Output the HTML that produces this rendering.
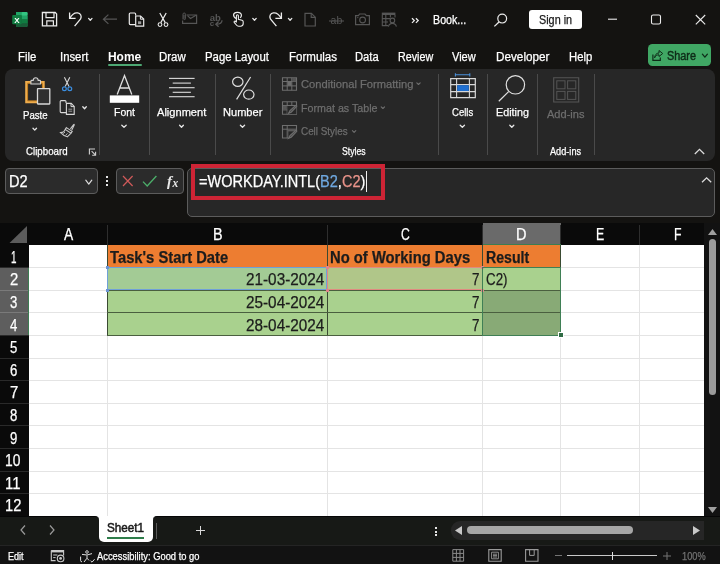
<!DOCTYPE html>
<html lang="en"><head><meta charset="utf-8"><title>Excel - WORKDAY.INTL</title>
<style>

html,body{margin:0;padding:0}
body{width:720px;height:564px;overflow:hidden;background:#141311;position:relative;font-family:"Liberation Sans", sans-serif;}
.a{position:absolute}
.t{position:absolute;white-space:nowrap;transform-origin:0 50%;-webkit-text-stroke:0.25px currentColor;}
svg{position:absolute;overflow:visible}
.sep{position:absolute;width:1px;background:#4a4a4a;top:74px;height:81px}
.box{position:absolute;box-sizing:border-box;border:1px solid #5c5c5c;border-radius:4px;background:#2b2b2b}
.hl{position:absolute;height:1px;background:#e4e4e4;left:28.8px;width:675.2px}
.vl{position:absolute;width:1px;background:#e4e4e4;top:245px;height:271px}
</style></head>
<body>
<div class="a" style="left:5px;top:69.2px;width:710px;height:91.8px;background:#272727;border-radius:8px;"></div>
<div class="sep" style="left:99.1px"></div>
<div class="sep" style="left:148.9px"></div>
<div class="sep" style="left:214.9px"></div>
<div class="sep" style="left:270.1px"></div>
<div class="sep" style="left:437.7px"></div>
<div class="sep" style="left:486.8px"></div>
<div class="sep" style="left:537.2px"></div>
<div class="sep" style="left:594.1px"></div>
<div class="a" style="left:108.2px;top:64.3px;width:34px;height:2.1px;background:#4da873;border-radius:1px;"></div>
<div class="a" style="left:528.5px;top:10.2px;width:53px;height:19.2px;background:#ffffff;border-radius:3px;"></div>
<div class="a" style="left:647.7px;top:44.2px;width:63.7px;height:21.8px;background:#40a764;border-radius:4.5px;"></div>
<div class="box" style="left:5px;top:168px;width:93px;height:26px"></div>
<div class="box" style="left:116px;top:168px;width:68px;height:26px"></div>
<div class="box" style="left:187px;top:168px;width:527.5px;height:49px;border-radius:5px;background:#272727"></div>
<div class="a" style="left:190.5px;top:164px;width:194px;height:36px;box-sizing:border-box;border:4px solid #cd2435"></div>
<div class="a" style="left:366.3px;top:171px;width:1px;height:20.5px;background:#f0f0f0;"></div>
<div class="a" style="left:106.4px;top:176.4px;width:2px;height:2px;background:#e6e6e6;"></div>
<div class="a" style="left:106.4px;top:180.1px;width:2px;height:2px;background:#e6e6e6;"></div>
<div class="a" style="left:106.4px;top:183.8px;width:2px;height:2px;background:#e6e6e6;"></div>
<div class="a" style="left:0px;top:223px;width:720px;height:22px;background:#0a0a0a;"></div>
<div class="a" style="left:0px;top:245px;width:28.8px;height:271.2px;background:#0a0a0a;"></div>
<div class="a" style="left:28.8px;top:245px;width:675.2px;height:271.2px;background:#ffffff;"></div>
<div class="a" style="left:704px;top:223px;width:16px;height:293.2px;background:#121212;"></div>
<div class="a" style="left:482.5px;top:223px;width:78px;height:22px;background:#6a6a6a;"></div>
<div class="a" style="left:0px;top:267.6px;width:28.8px;height:67.80000000000001px;background:#5e5e5e;"></div>
<div class="a" style="left:106.5px;top:225px;width:1px;height:20px;background:#2e2e2e;"></div>
<div class="a" style="left:326.5px;top:225px;width:1px;height:20px;background:#2e2e2e;"></div>
<div class="a" style="left:482.0px;top:225px;width:1px;height:20px;background:#2e2e2e;"></div>
<div class="a" style="left:560.0px;top:225px;width:1px;height:20px;background:#2e2e2e;"></div>
<div class="a" style="left:638.5px;top:225px;width:1px;height:20px;background:#2e2e2e;"></div>
<div class="a" style="left:0px;top:267.1px;width:28.8px;height:1px;background:#2a2a2a;"></div>
<div class="a" style="left:0px;top:289.7px;width:28.8px;height:1px;background:#7a7a7a;"></div>
<div class="a" style="left:0px;top:312.3px;width:28.8px;height:1px;background:#7a7a7a;"></div>
<div class="a" style="left:0px;top:334.9px;width:28.8px;height:1px;background:#2a2a2a;"></div>
<div class="a" style="left:0px;top:357.5px;width:28.8px;height:1px;background:#2a2a2a;"></div>
<div class="a" style="left:0px;top:380.1px;width:28.8px;height:1px;background:#2a2a2a;"></div>
<div class="a" style="left:0px;top:402.70000000000005px;width:28.8px;height:1px;background:#2a2a2a;"></div>
<div class="a" style="left:0px;top:425.3px;width:28.8px;height:1px;background:#2a2a2a;"></div>
<div class="a" style="left:0px;top:447.9px;width:28.8px;height:1px;background:#2a2a2a;"></div>
<div class="a" style="left:0px;top:470.5px;width:28.8px;height:1px;background:#2a2a2a;"></div>
<div class="a" style="left:0px;top:493.1px;width:28.8px;height:1px;background:#2a2a2a;"></div>
<div class="a" style="left:28.2px;top:267.6px;width:1px;height:67.80000000000001px;background:#3d7d52;"></div>
<div class="a" style="left:482.5px;top:244px;width:78px;height:1px;background:#3d7d52;"></div>
<svg style="left:9px;top:225px;" width="19" height="19" viewBox="0 0 19 19" fill="none"><path d="M18 1V18H0.5Z" fill="#5c5c5c"/></svg>
<div class="hl" style="top:267.1px"></div>
<div class="hl" style="top:289.7px"></div>
<div class="hl" style="top:312.3px"></div>
<div class="hl" style="top:334.9px"></div>
<div class="hl" style="top:357.5px"></div>
<div class="hl" style="top:380.1px"></div>
<div class="hl" style="top:402.7px"></div>
<div class="hl" style="top:425.3px"></div>
<div class="hl" style="top:447.9px"></div>
<div class="hl" style="top:470.5px"></div>
<div class="hl" style="top:493.1px"></div>
<div class="vl" style="left:106.5px"></div>
<div class="vl" style="left:326.5px"></div>
<div class="vl" style="left:482.0px"></div>
<div class="vl" style="left:560.0px"></div>
<div class="vl" style="left:638.5px"></div>
<div class="a" style="left:107px;top:245.0px;width:453.5px;height:22.6px;background:#ed7d31;"></div>
<div class="a" style="left:107px;top:267.6px;width:453.5px;height:67.80000000000001px;background:#a9d18e;"></div>
<div class="a" style="left:482.5px;top:290.2px;width:78px;height:45.2px;background:#88aa76;"></div>
<div class="a" style="left:106.5px;top:245.0px;width:1px;height:90.4px;background:#3a4a32;"></div>
<div class="a" style="left:326.5px;top:245.0px;width:1px;height:90.4px;background:#3a4a32;"></div>
<div class="a" style="left:482.0px;top:245.0px;width:1px;height:90.4px;background:#3a4a32;"></div>
<div class="a" style="left:560.0px;top:245.0px;width:1px;height:90.4px;background:#3a4a32;"></div>
<div class="a" style="left:107px;top:289.7px;width:453.5px;height:1px;background:#4a5f3f;"></div>
<div class="a" style="left:107px;top:312.3px;width:453.5px;height:1px;background:#4a5f3f;"></div>
<div class="a" style="left:107px;top:334.9px;width:453.5px;height:1px;background:#4a5f3f;"></div>
<div class="a" style="left:107px;top:267.1px;width:453.5px;height:1px;background:#c9c0a0;"></div>
<div class="a" style="left:107px;top:267.1px;width:220px;height:22.6px;box-sizing:border-box;border:1px solid #6fa0d8;background:rgba(120,160,220,0.10)"></div>
<div class="a" style="left:327px;top:267.1px;width:155.5px;height:22.6px;box-sizing:border-box;border:1px solid #e08a80;background:rgba(230,120,110,0.12)"></div>
<div class="a" style="left:105.5px;top:266.1px;width:3px;height:3px;background:#6b94d4;"></div>
<div class="a" style="left:105.5px;top:288.7px;width:3px;height:3px;background:#6b94d4;"></div>
<div class="a" style="left:325.5px;top:266.1px;width:3px;height:3px;background:#e0848a;"></div>
<div class="a" style="left:325.5px;top:288.7px;width:3px;height:3px;background:#e0848a;"></div>
<div class="a" style="left:481.0px;top:266.1px;width:3px;height:3px;background:#e0848a;"></div>
<div class="a" style="left:481.0px;top:288.7px;width:3px;height:3px;background:#e0848a;"></div>
<div class="a" style="left:482px;top:267.1px;width:79px;height:68.80000000000001px;box-sizing:border-box;border:1px solid #3f7f55"></div>
<div class="a" style="left:558.5px;top:333.4px;width:4px;height:4px;background:#2f6b45;outline:0.7px solid #fff;"></div>
<div class="a" style="left:709px;top:239px;width:7px;height:156px;background:#9b9b9b;border-radius:4px;"></div>
<svg style="left:708px;top:229px;" width="9" height="6" viewBox="0 0 9 6" fill="none"><path d="M4.5 0L9 6H0Z" fill="#a0a0a0"/></svg>
<svg style="left:708px;top:507px;" width="9" height="6" viewBox="0 0 9 6" fill="none"><path d="M0 0H9L4.5 6Z" fill="#a0a0a0"/></svg>
<div class="a" style="left:0px;top:516.2px;width:720px;height:29px;background:#171916;"></div>
<div class="a" style="left:0px;top:516.2px;width:720px;height:1.2px;background:#060606;"></div>
<div class="a" style="left:95px;top:516.2px;width:62px;height:4px;background:#ffffff;"></div>
<div class="a" style="left:89px;top:516.2px;width:10px;height:8px;background:#171916;border-radius:0 4px 0 0;border-top:1.2px solid #060606;box-sizing:border-box;"></div>
<div class="a" style="left:153px;top:516.2px;width:10px;height:8px;background:#171916;border-radius:4px 0 0 0;border-top:1.2px solid #060606;box-sizing:border-box;"></div>
<div class="a" style="left:99px;top:516.2px;width:54px;height:26px;background:#ffffff;border-radius:0 0 5px 5px;"></div>
<div class="a" style="left:107px;top:536.8px;width:37px;height:2px;background:#2e7d4a;"></div>
<div class="a" style="left:155.5px;top:523px;width:1px;height:16px;background:#5a5a5a;"></div>
<div class="a" style="left:451px;top:521px;width:253px;height:19px;background:#262626;border-radius:9px 0 0 9px;"></div>
<div class="a" style="left:467px;top:526px;width:166px;height:8px;background:#a6a6a6;border-radius:4px;"></div>
<svg style="left:455px;top:525.5px;" width="7" height="9" viewBox="0 0 7 9" fill="none"><path d="M7 0V9L0 4.5Z" fill="#c8c8c8"/></svg>
<svg style="left:693px;top:525.5px;" width="7" height="9" viewBox="0 0 7 9" fill="none"><path d="M0 0V9L7 4.5Z" fill="#c8c8c8"/></svg>
<div class="a" style="left:435px;top:527px;width:2px;height:2px;background:#e6e6e6;"></div>
<div class="a" style="left:435px;top:530.5px;width:2px;height:2px;background:#e6e6e6;"></div>
<div class="a" style="left:435px;top:534px;width:2px;height:2px;background:#e6e6e6;"></div>
<svg style="left:20px;top:525px;" width="6" height="10" viewBox="0 0 6 10" fill="none"><path d="M5 0.5L1 5L5 9.5" stroke="#9a9a9a" stroke-width="1.2"/></svg>
<svg style="left:49px;top:525px;" width="6" height="10" viewBox="0 0 6 10" fill="none"><path d="M1 0.5L5 5L1 9.5" stroke="#9a9a9a" stroke-width="1.2"/></svg>
<svg style="left:195.5px;top:525.5px;" width="9" height="9" viewBox="0 0 9 9" fill="none"><path d="M4.5 0V9M0 4.5H9" stroke="#d8d8d8" stroke-width="1"/></svg>
<div class="a" style="left:0px;top:545.2px;width:720px;height:18.8px;background:#121212;"></div>
<div class="a" style="left:0px;top:545px;width:720px;height:1px;background:#242424;"></div>
<div class="a" style="left:567px;top:555.2px;width:90px;height:1.2px;background:#c8c8c8;"></div>
<div class="a" style="left:611.8px;top:552px;width:1.4px;height:7.5px;background:#e0e0e0;"></div>
<div class="a" style="left:555px;top:555.2px;width:7px;height:1.1px;background:#747474;"></div>
<svg style="left:662.5px;top:552px;" width="8" height="8" viewBox="0 0 8 8" fill="none"><path d="M4 0V8M0 4H8" stroke="#747474" stroke-width="1"/></svg>
<svg style="left:0;top:0;will-change:transform" width="720" height="564" viewBox="0 0 720 564" fill="none">
<rect x="16" y="12" width="11.5" height="15" rx="1.2" fill="#1f9a5b"/>
<rect x="16" y="12" width="5.8" height="3.8" fill="#21a366"/>
<rect x="21.7" y="12" width="5.8" height="3.8" rx="1" fill="#33c481"/>
<rect x="16" y="15.8" width="5.8" height="3.7" fill="#107c41"/>
<rect x="21.7" y="15.8" width="5.8" height="3.7" fill="#21a366"/>
<rect x="16" y="19.5" width="11.5" height="7.5" rx="1.2" fill="#185c37"/>
<rect x="21.7" y="19.5" width="5.8" height="3.7" fill="#107c41"/>
<rect x="12.2" y="15" width="9.6" height="9.2" rx="1" fill="#107c41"/>
<text x="17" y="22.6" font-family="Liberation Sans, sans-serif" font-size="8" font-weight="700" fill="#fff" text-anchor="middle">X</text>
<path d="M42.4 12.5H55.2L56.6 13.9V25.8H42.4Z" stroke="#ececec" stroke-width="1.3" fill="none" />
<path d="M46 12.5V17.6H54V12.5" stroke="#ececec" stroke-width="1.2" fill="none" />
<path d="M46.8 25.8V20.9H53.4V25.8" stroke="#ececec" stroke-width="1.2" fill="none" />
<path d="M69.6 12.6V18.4H75.6" stroke="#ececec" stroke-width="1.3" fill="none" />
<path d="M69.9 18.1C72 14.3 75.2 12.6 77.6 12.9C80.6 13.3 82 16.2 80.6 19L74.6 26.2" stroke="#ececec" stroke-width="1.3" fill="none" />
<path d="M88.6 18.4L90.3 20.3L92.0 18.4" stroke="#e6e6e6" stroke-width="1.3" fill="none" stroke-linecap="round" stroke-linejoin="round"/>
<path d="M103.4 19.2H117M108.4 14.6L103.4 19.2L108.4 23.9" stroke="#565656" stroke-width="1.2" fill="none" />
<path d="M135.6 24.6H130.3Q129.3 24.6 129.3 23.6V14Q129.3 13 130.3 13H134.6Q135.6 13 135.6 14V15.5" stroke="#ececec" stroke-width="1.2" fill="none" />
<path d="M135.7 16H140.6L143.7 19V26.2H135.7Z" stroke="#ececec" stroke-width="1.2" fill="none" />
<path d="M140.4 16V19.2H143.7" stroke="#ececec" stroke-width="1" fill="none" />
<rect x="138" y="21.3" width="3.2" height="2.8" fill="#9a9a9a"/>
<path d="M159.8 13L165.2 22.6M166.2 13L160.8 22.6" stroke="#ececec" stroke-width="1.2" fill="none" />
<circle cx="160" cy="24.6" r="1.9" stroke="#ececec" stroke-width="1.1"/>
<circle cx="166" cy="24.6" r="1.9" stroke="#ececec" stroke-width="1.1"/>
<path d="M186.5 15H196.6V23.4H182.6V20.5" stroke="#565656" stroke-width="1.2" fill="none" />
<path d="M187.5 15.6L190.5 18.5L196 15.2" stroke="#565656" stroke-width="1.1" fill="none" />
<path d="M183 19.5V14.2Q183 13 184.2 13Q185.4 13 185.4 14.2V18.8Q185.4 19.6 184.6 19.6Q184 19.6 184 18.8V14.8" stroke="#565656" stroke-width="1" fill="none" />
<text x="209.8" y="20.6" font-family="Liberation Sans, sans-serif" font-size="9.5" font-weight="700" fill="#565656">ab</text>
<text x="209.8" y="26" font-family="Liberation Sans, sans-serif" font-size="8" font-weight="700" fill="#565656">c</text>
<path d="M222 20.2C222 23 220.4 24.2 216.2 24.2M218.6 21.6L215.8 24.2L218.6 26.8" stroke="#565656" stroke-width="1.3" fill="none" />
<path d="M236.2 18.6C234.4 17.6 233.4 16.2 233.6 14.6C233.9 12.9 235.6 12.2 237.6 12.3C240 12.4 241.6 13.6 241.4 15.6C241.3 16.6 240.8 17.2 240.2 17.8" stroke="#ececec" stroke-width="1.2" fill="none" />
<path d="M236.4 22.6V15.8Q236.4 14.8 237.4 14.8Q238.4 14.8 238.4 15.8V19.4L242 20.2Q243.2 20.6 243.2 21.8V23.6Q243.2 26.2 240.6 26.2H238.6Q237.2 26.2 236.4 25L234.2 22.4Q233.8 21.6 234.6 21.2Q235.4 21 236.4 22.2" stroke="#ececec" stroke-width="1.1" fill="none" />
<path d="M252.8 18.4L254.5 20.3L256.2 18.4" stroke="#e6e6e6" stroke-width="1.3" fill="none" stroke-linecap="round" stroke-linejoin="round"/>
<path d="M281.4 12.6V18.4H275.4" stroke="#ececec" stroke-width="1.3" fill="none" />
<path d="M281.1 18.1C279 14.3 275.8 12.6 273.4 12.9C270.4 13.3 269 16.2 270.4 19L276.4 26.2" stroke="#ececec" stroke-width="1.3" fill="none" />
<path d="M288.40000000000003 18.4L290.1 20.3L291.8 18.4" stroke="#e6e6e6" stroke-width="1.3" fill="none" stroke-linecap="round" stroke-linejoin="round"/>
<path d="M305 13.3H311.4L315.3 17.2V26H305Z" stroke="#565656" stroke-width="1.2" fill="none" />
<path d="M311.2 13.5V17.4H315.2" stroke="#565656" stroke-width="1.1" fill="none" />
<text x="330.6" y="24.4" font-family="Liberation Sans, sans-serif" font-size="10.5" fill="#565656">ab</text>
<path d="M329 21H344" stroke="#565656" stroke-width="1" fill="none" />
<path d="M355.6 15.6H358.4L359.6 14H365L366.4 15.6H369.4V24.6H355.6Z" stroke="#565656" stroke-width="1.2" fill="none" />
<circle cx="362.6" cy="20" r="2.9" stroke="#565656" stroke-width="1.1"/>
<circle cx="357.8" cy="17.6" r="0.7" fill="#565656"/>
<rect x="381.8" y="12.6" width="13.6" height="2.4" fill="#565656"/>
<path d="M382.3 15V25.6H388M385.8 15V25.6M382.3 18.6H390M382.3 22H388M390.4 15V17.6M395 15V17.6" stroke="#565656" stroke-width="1.1" fill="none" />
<circle cx="392.4" cy="20.4" r="2.3" stroke="#565656" stroke-width="1.1"/>
<path d="M388.4 26.6C389 24.2 390.4 23.4 392.4 23.4C394.4 23.4 395.8 24.2 396.4 26.6" stroke="#565656" stroke-width="1.1" fill="none" />
<path d="M412 18.3L414.3 20.6L412 22.9M415.9 18.3L418.2 20.6L415.9 22.9" stroke="#ececec" stroke-width="1.3" fill="none" />
<circle cx="502.2" cy="18.6" r="4.4" stroke="#ececec" stroke-width="1.2"/>
<path d="M499 22L494.4 26.4" stroke="#ececec" stroke-width="1.3" fill="none" />
<path d="M608 19.2H617" stroke="#ececec" stroke-width="1.1" fill="none" />
<rect x="651.5" y="15" width="9" height="9" rx="1.6" stroke="#ececec" stroke-width="1.1"/>
<path d="M695.8 15L705.2 24.4M705.2 15L695.8 24.4" stroke="#ececec" stroke-width="1.1" fill="none" />
<path d="M652.9 54.6V60.3H660.3V57.6" stroke="#0e2c18" stroke-width="1.2" fill="none" />
<path d="M654.6 57.8C654.9 54.8 656.4 53.1 659 53V50.5L662.7 53.5L659 56.5V54.8C657 54.8 655.6 55.8 654.6 57.8Z" stroke="#0e2c18" stroke-width="1" fill="none" />
<path d="M702.4 54.199999999999996L704.9000000000001 57.1L707.4000000000001 54.199999999999996" stroke="#0e2c18" stroke-width="1.3" fill="none" stroke-linecap="round" stroke-linejoin="round"/>
<path d="M31 82.2H26.5V102H37" stroke="#eeac4c" stroke-width="2.6" fill="none" stroke-linejoin="miter"/>
<path d="M40.4 82.2H43.4V88" stroke="#eeac4c" stroke-width="2.6" fill="none" stroke-linejoin="miter"/>
<path d="M31 83.2H27.6V100.9H37" stroke="#c07a1c" stroke-width="0.9" fill="none" />
<path d="M40.4 83.2H42.4V88" stroke="#c07a1c" stroke-width="0.9" fill="none" />
<path d="M30.9 84V81.2Q30.9 80.4 31.7 80.4H33.2Q33.4 77.7 35.7 77.7Q38 77.7 38.2 80.4H39.7Q40.5 80.4 40.5 81.2V84Z" stroke="#d2d2d2" stroke-width="1.1" fill="#3a3a3a" />
<rect x="37.5" y="88.6" width="12.3" height="15.4" rx="0.4" stroke="#d8d8d8" stroke-width="1.3" fill="#2f2f2f"/>
<path d="M33.0 128.2L34.75 130.1L36.5 128.2" stroke="#e6e6e6" stroke-width="1.3" fill="none" stroke-linecap="round" stroke-linejoin="round"/>
<path d="M64.4 77.2L69 86.6M69.8 77.2L65.2 86.6" stroke="#d8d8d8" stroke-width="1.1" fill="none" />
<circle cx="64.4" cy="88.8" r="1.9" stroke="#3b8ee0" stroke-width="1.2"/>
<circle cx="69.8" cy="88.8" r="1.9" stroke="#3b8ee0" stroke-width="1.2"/>
<path d="M66 112.6H61.2Q60.2 112.6 60.2 111.6V101.6Q60.2 100.6 61.2 100.6H65Q66 100.6 66 101.6V103" stroke="#d8d8d8" stroke-width="1.1" fill="none" />
<path d="M66.4 103.4H71.2L74.2 106.4V114.4H66.4Z" stroke="#d8d8d8" stroke-width="1.1" fill="none" />
<path d="M71 103.4V106.6H74.2" stroke="#d8d8d8" stroke-width="1" fill="none" />
<path d="M68.4 109.2H72.2M68.4 111.2H72.2" stroke="#9a9a9a" stroke-width="1" fill="none" />
<path d="M82.8 106.80000000000001L84.55 108.7L86.3 106.80000000000001" stroke="#e6e6e6" stroke-width="1.3" fill="none" stroke-linecap="round" stroke-linejoin="round"/>
<path d="M70.4 128.8L73.6 124.6Q74.4 124 74.2 125.2L71.8 130" stroke="#c8c8c8" stroke-width="1.1" fill="none" />
<path d="M66.4 127.6L72.2 131.4L71 133.2L65.2 129.4Z" stroke="#c8c8c8" stroke-width="1.1" fill="none" />
<path d="M65.2 129.6C64.4 131.6 62.6 132.6 60.6 132.6C62.4 134.6 64.8 136.2 67.4 136.8C68.6 135.6 70 134.4 70.8 133.2" stroke="#c8c8c8" stroke-width="1.1" fill="none" />
<path d="M63.4 133.6L65 132M65.6 135.4L67.4 133.4" stroke="#c8c8c8" stroke-width="0.9" fill="none" />
<path d="M89.4 154.6V149H95M91.6 151.2L95.6 155.2M95.6 151.8V155.2H92.2" stroke="#d0d0d0" stroke-width="1.1" fill="none" />
<path d="M117.2 94.6L124.5 75.6L131.8 94.6M119.8 88H129.2" stroke="#e0e0e0" stroke-width="1.3" fill="none" />
<rect x="109.8" y="95.4" width="29.4" height="7.4" fill="#ffffff"/>
<path d="M121.8 125.30000000000001L124.0 127.3L126.2 125.30000000000001" stroke="#e6e6e6" stroke-width="1.3" fill="none" stroke-linecap="round" stroke-linejoin="round"/>
<path d="M169 78.4H194.6" stroke="#dcdcdc" stroke-width="1.1" fill="none" />
<path d="M172.7 83.1H190.9" stroke="#dcdcdc" stroke-width="1.1" fill="none" />
<path d="M169 87.7H194.6" stroke="#dcdcdc" stroke-width="1.1" fill="none" />
<path d="M172.7 92.3H190.9" stroke="#dcdcdc" stroke-width="1.1" fill="none" />
<path d="M169 96.7H194.6" stroke="#dcdcdc" stroke-width="1.1" fill="none" />
<path d="M179.60000000000002 125.30000000000001L181.5 127.3L183.39999999999998 125.30000000000001" stroke="#e6e6e6" stroke-width="1.3" fill="none" stroke-linecap="round" stroke-linejoin="round"/>
<ellipse cx="237.8" cy="81.8" rx="5.2" ry="4.6" stroke="#e0e0e0" stroke-width="1.2"/>
<ellipse cx="248.8" cy="94.6" rx="5.2" ry="4.6" stroke="#e0e0e0" stroke-width="1.2"/>
<path d="M250.6 77L236.6 99.4" stroke="#e0e0e0" stroke-width="1.2" fill="none" />
<path d="M240.4 125.30000000000001L242.5 127.3L244.6 125.30000000000001" stroke="#e6e6e6" stroke-width="1.3" fill="none" stroke-linecap="round" stroke-linejoin="round"/>
<path d="M282.5 77.8H296.5V90.3H282.5Z" stroke="#6e6e6e" stroke-width="1.1" fill="none" />
<path d="M282.5 81.5H296.5M282.5 85.89999999999999H296.5M287.2 77.8V90.3M291.8 77.8V90.3" stroke="#6e6e6e" stroke-width="1" fill="none" />
<rect x="287.6" y="81.8" width="3.8" height="4" fill="#6e6e6e"/>
<rect x="292.2" y="77.8" width="3.8" height="3.8" fill="#555"/>
<path d="M282.5 101.8H296.5V114.3H282.5Z" stroke="#6e6e6e" stroke-width="1.1" fill="none" />
<path d="M282.5 105.5H296.5M282.5 109.89999999999999H296.5M287.2 101.8V114.3M291.8 101.8V114.3" stroke="#6e6e6e" stroke-width="1" fill="none" />
<rect x="287.4" y="106" width="9" height="8" fill="#272727"/>
<path d="M288.4 113.4L290 110.6L295.6 105.4Q296.8 105 296.8 106.4L291.2 112.2Z" stroke="#6e6e6e" stroke-width="1.1" fill="#4a4a4a" />
<rect x="283" y="105.8" width="3.8" height="3.8" fill="#565656"/>
<path d="M282.5 125.5H296.5V138H282.5Z" stroke="#6e6e6e" stroke-width="1.1" fill="none" />
<path d="M282.5 129.2H296.5M287.2 125.5V138" stroke="#6e6e6e" stroke-width="1" fill="none" />
<rect x="287.8" y="129.8" width="8" height="7.6" fill="#5a5a5a"/>
<rect x="288.4" y="131.4" width="9" height="7.6" fill="#272727"/>
<path d="M288.4 138.4L290 135.6L295.6 130.4Q296.8 130 296.8 131.4L291.2 137.2Z" stroke="#6e6e6e" stroke-width="1.1" fill="#4a4a4a" />
<path d="M416.8 82.80000000000001L418.5 84.5L420.2 82.80000000000001" stroke="#6e6e6e" stroke-width="1.1" fill="none" stroke-linecap="round" stroke-linejoin="round"/>
<path d="M381.2 106.80000000000001L382.9 108.5L384.59999999999997 106.80000000000001" stroke="#6e6e6e" stroke-width="1.1" fill="none" stroke-linecap="round" stroke-linejoin="round"/>
<path d="M352.40000000000003 130.6L354.1 132.3L355.8 130.6" stroke="#6e6e6e" stroke-width="1.1" fill="none" stroke-linecap="round" stroke-linejoin="round"/>
<path d="M455.4 73.2V76.4M469.8 73.2V76.4M455.4 74.8H469.8" stroke="#4a90d9" stroke-width="1.1" fill="none" />
<path d="M450.7 78.6H475.3V97.6H450.7Z" stroke="#d8d8d8" stroke-width="1.2" fill="none" />
<path d="M450.7 84.6H475.3M450.7 91.6H475.3M456.6 78.6V97.6M469.4 78.6V97.6" stroke="#d8d8d8" stroke-width="1.1" fill="none" />
<rect x="457.2" y="85.2" width="11.6" height="5.8" fill="#1f6fd0"/>
<path d="M460.2 125.30000000000001L462.35 127.3L464.5 125.30000000000001" stroke="#e6e6e6" stroke-width="1.3" fill="none" stroke-linecap="round" stroke-linejoin="round"/>
<circle cx="515.4" cy="84.8" r="9.2" stroke="#e0e0e0" stroke-width="1.2"/>
<path d="M508.6 91.6L498.8 101.2" stroke="#e0e0e0" stroke-width="1.2" fill="none" />
<path d="M509.8 125.30000000000001L511.8 127.3L513.8000000000001 125.30000000000001" stroke="#e6e6e6" stroke-width="1.3" fill="none" stroke-linecap="round" stroke-linejoin="round"/>
<path d="M553.7 77.8H578.7V102H553.7Z" stroke="#565656" stroke-width="1.1" fill="none" />
<rect x="556.8" y="80.8" width="8.2" height="8" stroke="#565656" stroke-width="1"/>
<rect x="556.8" y="91.4" width="8.2" height="8" stroke="#565656" stroke-width="1"/>
<rect x="567.6" y="80.8" width="8.2" height="8" stroke="#565656" stroke-width="1"/>
<rect x="567.6" y="91.4" width="8.2" height="8" stroke="#565656" stroke-width="1"/>
<path d="M694.8 154L699.5 149.4L704.2 154" stroke="#dcdcdc" stroke-width="1.3" fill="none" />
<path d="M85.8 180.20000000000002L88.8 184.1L91.8 180.20000000000002" stroke="#dcdcdc" stroke-width="1.2" fill="none" stroke-linecap="round" stroke-linejoin="round"/>
<path d="M123 176L132.6 186M132.6 176L123 186" stroke="#d05a5a" stroke-width="1.2" fill="none" />
<path d="M143 181.6L147.2 186L156.4 176" stroke="#4cae6a" stroke-width="1.3" fill="none" />
<text x="167" y="186" font-family="Liberation Serif, serif" font-style="italic" font-weight="700" font-size="15" fill="#e8e8e8">f</text>
<text x="172.4" y="186.6" font-family="Liberation Serif, serif" font-style="italic" font-weight="700" font-size="11.5" fill="#e8e8e8">x</text>
<path d="M702 182.2L706.6 177.8L711.2 182.2" stroke="#dcdcdc" stroke-width="1.3" fill="none" />
<path d="M51.3 550.6H63.6V555.6M51.3 550.6V560.6H55.6" stroke="#c8c8c8" stroke-width="1.1" fill="none" />
<rect x="51.3" y="550.4" width="12.3" height="2" fill="#c8c8c8"/>
<path d="M53.2 555H57.4M53.2 557.6H55.6" stroke="#c8c8c8" stroke-width="1" fill="none" />
<circle cx="60.6" cy="558.4" r="3.3" stroke="#c8c8c8" stroke-width="1.1"/>
<circle cx="60.6" cy="558.4" r="1.4" fill="#c8c8c8"/>
<circle cx="87" cy="552" r="1.3" stroke="#e0e0e0" stroke-width="0.9"/>
<path d="M82 554.4Q87 556 92 553.6M87 555.4V558.2M87 558.2L84 562M87 558.2L89 560.4" stroke="#e0e0e0" stroke-width="1" fill="none" />
<path d="M80.6 556.6V560.6Q80.6 561.8 82 561.8" stroke="#e0e0e0" stroke-width="1" fill="none" />
<path d="M90.6 560.8L92 562.2L94.6 559.2" stroke="#e0e0e0" stroke-width="1" fill="none" />
<path d="M452.8 549.6H463.6V561.2H452.8Z M452.8 553.4H463.6M452.8 557.4H463.6M456.4 549.6V561.2M460 549.6V561.2" stroke="#8a8a8a" stroke-width="1" fill="none" />
<path d="M488.8 549.6H501.2V561.2H488.8Z" stroke="#9a9a9a" stroke-width="1.1" fill="none" />
<path d="M491.6 552.2H498.4V558.8H491.6ZM493 554.2H497M493 555.6H497M493 557H497" stroke="#9a9a9a" stroke-width="0.9" fill="none" />
<path d="M525.6 549.6H538V561.2H525.6Z" stroke="#9a9a9a" stroke-width="1.1" fill="none" />
<path d="M529.6 549.6V555.4H534.2V549.6" stroke="#9a9a9a" stroke-width="1" fill="none" />
</svg>
<!-- text labels -->
<div id="labels" style="position:absolute;left:0;top:0;width:720px;height:564px;will-change:transform">
<span class="t" id="t0" style="left:433.0px;top:13px;font-size:12px;line-height:14px;color:#ffffff;transform:scaleX(0.891);">Book...</span>
<span class="t" id="t1" style="left:538.5px;top:13px;font-size:12px;line-height:14px;color:#1a1a1a;transform:scaleX(0.902);">Sign in</span>
<span class="t" id="t2" style="left:17.5px;top:50px;font-size:12px;line-height:14px;color:#ffffff;transform:scaleX(0.941);">File</span>
<span class="t" id="t3" style="left:60.1px;top:50px;font-size:12px;line-height:14px;color:#ffffff;transform:scaleX(0.943);">Insert</span>
<span class="t" id="t4" style="left:108.3px;top:50px;font-size:12px;line-height:14px;color:#ffffff;font-weight:700;transform:scaleX(0.995);-webkit-text-stroke:0;">Home</span>
<span class="t" id="t5" style="left:159.0px;top:50px;font-size:12px;line-height:14px;color:#ffffff;transform:scaleX(0.953);">Draw</span>
<span class="t" id="t6" style="left:204.5px;top:50px;font-size:12px;line-height:14px;color:#ffffff;transform:scaleX(0.948);">Page Layout</span>
<span class="t" id="t7" style="left:289.0px;top:50px;font-size:12px;line-height:14px;color:#ffffff;transform:scaleX(0.960);">Formulas</span>
<span class="t" id="t8" style="left:355.0px;top:50px;font-size:12px;line-height:14px;color:#ffffff;transform:scaleX(0.935);">Data</span>
<span class="t" id="t9" style="left:397.5px;top:50px;font-size:12px;line-height:14px;color:#ffffff;transform:scaleX(0.895);">Review</span>
<span class="t" id="t10" style="left:452.0px;top:50px;font-size:12px;line-height:14px;color:#ffffff;transform:scaleX(0.919);">View</span>
<span class="t" id="t11" style="left:496.0px;top:50px;font-size:12px;line-height:14px;color:#ffffff;transform:scaleX(0.978);">Developer</span>
<span class="t" id="t12" style="left:569.0px;top:50px;font-size:12px;line-height:14px;color:#ffffff;transform:scaleX(0.940);">Help</span>
<span class="t" id="t13" style="left:667.0px;top:49px;font-size:12px;line-height:14px;color:#0e2c18;transform:scaleX(0.903);-webkit-text-stroke:0.45px #0e2c18;">Share</span>
<span class="t" id="t14" style="left:23.1px;top:109px;font-size:11.5px;line-height:12px;color:#ffffff;transform:scaleX(0.838);">Paste</span>
<span class="t" id="t15" style="left:26.0px;top:145px;font-size:11px;line-height:12px;color:#ffffff;transform:scaleX(0.884);">Clipboard</span>
<span class="t" id="t16" style="left:114.0px;top:106px;font-size:11.5px;line-height:12px;color:#ffffff;transform:scaleX(0.911);">Font</span>
<span class="t" id="t17" style="left:157.0px;top:106px;font-size:11.5px;line-height:12px;color:#ffffff;transform:scaleX(0.963);">Alignment</span>
<span class="t" id="t18" style="left:223.0px;top:106px;font-size:11.5px;line-height:12px;color:#ffffff;transform:scaleX(0.962);">Number</span>
<span class="t" id="t19" style="left:300.6px;top:78px;font-size:11.5px;line-height:12px;color:#6e6e6e;transform:scaleX(0.971);">Conditional Formatting</span>
<span class="t" id="t20" style="left:300.6px;top:102px;font-size:11.5px;line-height:12px;color:#6e6e6e;transform:scaleX(0.931);">Format as Table</span>
<span class="t" id="t21" style="left:300.6px;top:125px;font-size:11.5px;line-height:12px;color:#6e6e6e;transform:scaleX(0.858);">Cell Styles</span>
<span class="t" id="t22" style="left:342.0px;top:145px;font-size:11px;line-height:12px;color:#ffffff;transform:scaleX(0.788);">Styles</span>
<span class="t" id="t23" style="left:452.0px;top:106px;font-size:11.5px;line-height:12px;color:#ffffff;transform:scaleX(0.829);">Cells</span>
<span class="t" id="t24" style="left:495.5px;top:106px;font-size:11.5px;line-height:12px;color:#ffffff;transform:scaleX(0.935);">Editing</span>
<span class="t" id="t25" style="left:547.0px;top:108px;font-size:11.5px;line-height:12px;color:#6e6e6e;transform:scaleX(0.961);">Add-ins</span>
<span class="t" id="t26" style="left:549.5px;top:145px;font-size:11px;line-height:12px;color:#ffffff;transform:scaleX(0.833);">Add-ins</span>
<span class="t" id="t27" style="left:9.4px;top:172px;font-size:16.3px;line-height:18px;color:#ffffff;transform:scaleX(0.896);">D2</span>
<span class="t" id="t28" style="left:199.2px;top:172px;font-size:16.3px;line-height:18px;color:#ffffff;transform:scaleX(0.893);">=WORKDAY.INTL(<span style="color:#6fa8e0">B2</span>,<span style="color:#e8938a">C2</span>)</span>
<span class="t" id="t29" style="left:63.7px;top:226px;font-size:15.8px;line-height:17px;color:#ffffff;transform:scaleX(0.873);">A</span>
<span class="t" id="t30" style="left:212.8px;top:226px;font-size:15.8px;line-height:17px;color:#ffffff;transform:scaleX(0.911);">B</span>
<span class="t" id="t31" style="left:400.8px;top:226px;font-size:15.8px;line-height:17px;color:#ffffff;transform:scaleX(0.773);">C</span>
<span class="t" id="t32" style="left:516.1px;top:226px;font-size:15.8px;line-height:17px;color:#ffffff;transform:scaleX(0.920);">D</span>
<span class="t" id="t33" style="left:595.5px;top:226px;font-size:15.8px;line-height:17px;color:#ffffff;transform:scaleX(0.778);">E</span>
<span class="t" id="t34" style="left:673.8px;top:226px;font-size:15.8px;line-height:17px;color:#ffffff;transform:scaleX(0.778);">F</span>
<span class="t" id="t35" style="left:10.5px;top:249px;font-size:15.8px;line-height:17px;color:#ffffff;transform:scaleX(0.625);">1</span>
<span class="t" id="t36" style="left:9.8px;top:271px;font-size:15.8px;line-height:17px;color:#ffffff;transform:scaleX(0.938);">2</span>
<span class="t" id="t37" style="left:9.8px;top:294px;font-size:15.8px;line-height:17px;color:#ffffff;transform:scaleX(0.833);">3</span>
<span class="t" id="t38" style="left:9.8px;top:317px;font-size:15.8px;line-height:17px;color:#ffffff;transform:scaleX(0.833);">4</span>
<span class="t" id="t39" style="left:9.8px;top:339px;font-size:15.8px;line-height:17px;color:#ffffff;transform:scaleX(0.833);">5</span>
<span class="t" id="t40" style="left:9.8px;top:362px;font-size:15.8px;line-height:17px;color:#ffffff;transform:scaleX(0.833);">6</span>
<span class="t" id="t41" style="left:9.8px;top:384px;font-size:15.8px;line-height:17px;color:#ffffff;transform:scaleX(0.938);">7</span>
<span class="t" id="t42" style="left:9.8px;top:407px;font-size:15.8px;line-height:17px;color:#ffffff;transform:scaleX(0.833);">8</span>
<span class="t" id="t43" style="left:9.8px;top:430px;font-size:15.8px;line-height:17px;color:#ffffff;transform:scaleX(0.833);">9</span>
<span class="t" id="t44" style="left:5.4px;top:452px;font-size:15.8px;line-height:17px;color:#ffffff;transform:scaleX(0.876);">10</span>
<span class="t" id="t45" style="left:5.3px;top:475px;font-size:15.8px;line-height:17px;color:#ffffff;transform:scaleX(0.942);">11</span>
<span class="t" id="t46" style="left:5.3px;top:497px;font-size:15.8px;line-height:17px;color:#ffffff;transform:scaleX(0.931);">12</span>
<span class="t" id="t47" style="left:110.0px;top:249px;font-size:15.8px;line-height:17px;color:#1c1c1c;font-weight:700;transform:scaleX(0.935);">Task's Start Date</span>
<span class="t" id="t48" style="left:329.6px;top:249px;font-size:15.8px;line-height:17px;color:#1c1c1c;font-weight:700;transform:scaleX(0.936);">No of Working Days</span>
<span class="t" id="t49" style="left:485.6px;top:249px;font-size:15.8px;line-height:17px;color:#1c1c1c;font-weight:700;transform:scaleX(0.896);">Result</span>
<span class="t" id="t50" style="left:246.0px;top:271px;font-size:15.8px;line-height:17px;color:#1c1c1c;transform:scaleX(0.969);">21-03-2024</span>
<span class="t" id="t51" style="left:471.8px;top:271px;font-size:15.8px;line-height:17px;color:#1c1c1c;transform:scaleX(0.850);">7</span>
<span class="t" id="t52" style="left:246.0px;top:294px;font-size:15.8px;line-height:17px;color:#1c1c1c;transform:scaleX(0.969);">25-04-2024</span>
<span class="t" id="t53" style="left:471.8px;top:294px;font-size:15.8px;line-height:17px;color:#1c1c1c;transform:scaleX(0.850);">7</span>
<span class="t" id="t54" style="left:246.0px;top:317px;font-size:15.8px;line-height:17px;color:#1c1c1c;transform:scaleX(0.969);">28-04-2024</span>
<span class="t" id="t55" style="left:471.8px;top:317px;font-size:15.8px;line-height:17px;color:#1c1c1c;transform:scaleX(0.850);">7</span>
<span class="t" id="t56" style="left:485.7px;top:271px;font-size:15.8px;line-height:17px;color:#1c1c1c;transform:scaleX(0.845);">C2)</span>
<span class="t" id="t57" style="left:106.7px;top:521px;font-size:12.3px;line-height:14px;color:#1a1a1a;transform:scaleX(0.953);-webkit-text-stroke:0.5px #1a1a1a;">Sheet1</span>
<span class="t" id="t58" style="left:8.3px;top:550px;font-size:10.5px;line-height:12px;color:#ffffff;transform:scaleX(0.864);">Edit</span>
<span class="t" id="t59" style="left:96.7px;top:550px;font-size:10.5px;line-height:12px;color:#ffffff;transform:scaleX(0.891);">Accessibility: Good to go</span>
<span class="t" id="t60" style="left:681.7px;top:550px;font-size:10.5px;line-height:12px;color:#727272;transform:scaleX(0.879);">100%</span>
</div>
</body></html>
